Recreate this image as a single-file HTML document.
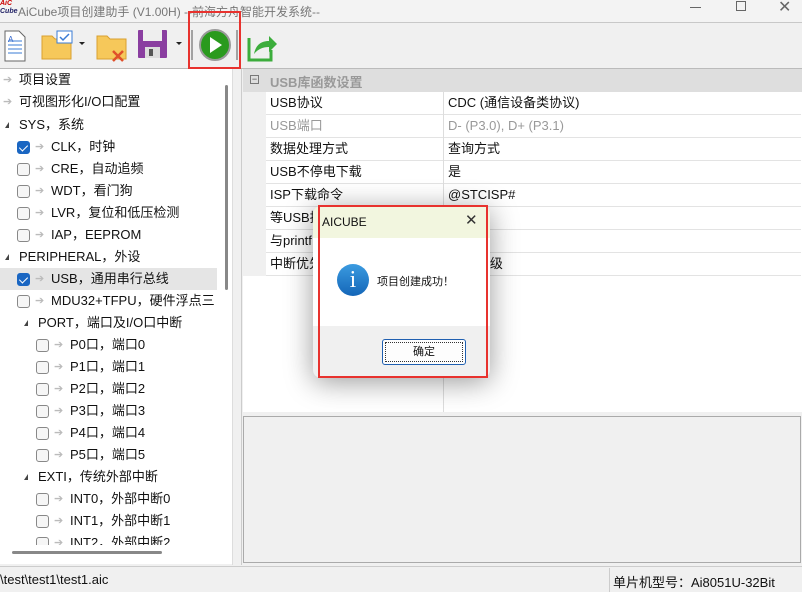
<!DOCTYPE html><html><head><meta charset="utf-8"><style>
*{margin:0;padding:0;box-sizing:border-box}
body{width:802px;height:592px;overflow:hidden;background:#f0f0f0;font-family:"Liberation Sans","Noto Sans CJK SC",sans-serif;font-size:13px;color:#111;position:relative}
.a{position:absolute}
.row{position:absolute;left:0;width:217px;height:22px;line-height:22px;white-space:nowrap}
.cb{position:absolute;top:5px;width:13px;height:13px;border:1px solid #888;border-radius:3px;background:#f6f6f6}
.cb.on{background:#1a66c2;border-color:#1a66c2}
.cb.on:after{content:"";position:absolute;left:3px;top:1px;width:4px;height:7px;border:solid #fff;border-width:0 1.5px 1.5px 0;transform:rotate(45deg)}
.ar{position:absolute;color:#bbb;font-size:11px}
.tri{position:absolute;top:8px;width:0;height:0;border-left:4px solid transparent;border-bottom:6px solid #444}
.pr{position:absolute;left:266px;width:535px;height:23px;line-height:22px;border-bottom:1px solid #e3e3e3;background:#fff}
.pr span{position:absolute;left:4px}
.pr b{font-weight:normal;position:absolute;left:182px}
</style></head><body>
<div class="a" style="left:0;top:0;width:802px;height:23px;background:#f3f3f3;border-bottom:1px solid #c8c8c8"></div>
<div class="a" style="left:0;top:0;font-size:7px;color:#c00;font-style:italic;font-weight:bold;line-height:8px">AiC<br><span style="color:#226">Cube</span></div>
<div class="a" style="left:18px;top:3px;color:#777;font-size:12px">AiCube项目创建助手 (V1.00H) --前海方舟智能开发系统--</div>
<div class="a" style="left:690px;top:7px;width:11px;border-top:1px solid #666"></div>
<div class="a" style="left:736px;top:1px;width:10px;height:10px;border:1px solid #666"></div>
<div class="a" style="left:778px;top:-3px;color:#666;font-size:16px">✕</div>
<div class="a" style="left:0;top:68px;width:802px;border-top:1px solid #bbb"></div>
<svg class="a" style="left:0;top:26px" width="290" height="40">
<path d="M5 5h14l6 6v24H5z" fill="#fff" stroke="#666"/><path d="M8 15h14M8 19h14M8 23h14M8 27h14" stroke="#3a7bd5"/><text x="8" y="16" font-size="8" fill="#36c">A</text>
<path d="M42 10h10l3 3h16v20H42z" fill="#f6c85a" stroke="#d9a030"/><rect x="57" y="5" width="15" height="12" fill="#fff" stroke="#3a7bd5"/><path d="M60 11l3 3 6-6" stroke="#3a7bd5" fill="none" stroke-width="1.5"/>
<path d="M79 16l3 3 3-3z" fill="#222"/>
<path d="M97 10h10l3 3h16v20H97z" fill="#f6c85a" stroke="#d9a030"/><path d="M113 25l10 10M123 25l-10 10" stroke="#e0502a" stroke-width="2.5"/>
<rect x="138" y="4" width="29" height="28" fill="#8a3ea0" rx="1"/><rect x="143" y="4" width="19" height="11" fill="#eee"/><rect x="145" y="21" width="15" height="11" fill="#ddd"/><rect x="149" y="23" width="4" height="7" fill="#555"/>
<path d="M176 16l3 3 3-3z" fill="#222"/>
<line x1="192" y1="4" x2="192" y2="34" stroke="#555"/><line x1="237" y1="4" x2="237" y2="34" stroke="#555"/>
<circle cx="215" cy="19" r="15" fill="#2a9a1e" stroke="#9a9a9a" stroke-width="2"/><path d="M210 11l12 8-12 8z" fill="#fff"/>
<path d="M249 12v22h22V24" stroke="#3cad3c" stroke-width="3" fill="none"/><path d="M254 28c2-10 8-13 15-13V10l8 8-8 8v-5c-6 0-11 2-15 7z" fill="#3cad3c"/>
</svg>
<div class="a" style="left:188px;top:11px;width:53px;height:58px;border:2px solid #e8322e"></div>
<div class="a" style="left:0;top:69px;width:232px;height:478px;background:#fff"></div>
<div class="a" style="left:0;top:547px;width:232px;height:17px;background:#fff"></div>
<div class="a" style="left:12px;top:551px;width:150px;height:3px;background:#888;border-radius:2px"></div>
<div class="a" style="left:225px;top:85px;width:3px;height:205px;background:#888;border-radius:2px"></div>
<div class="a" style="left:232px;top:69px;width:10px;height:496px;background:#f0f0f0;border-left:1px solid #ddd;border-right:1px solid #ccc"></div>
<div class="row" style="top:69px"><span class="ar" style="left:3px">➔</span><span class="a" style="left:19px">项目设置</span></div>
<div class="row" style="top:91px"><span class="ar" style="left:3px">➔</span><span class="a" style="left:19px">可视图形化I/O口配置</span></div>
<div class="row" style="top:114px"><span class="tri" style="left:5px"></span><span class="a" style="left:19px">SYS，系统</span></div>
<div class="row" style="top:136px"><span class="cb on" style="left:17px"></span><span class="ar" style="left:35px">➔</span><span class="a" style="left:51px">CLK，时钟</span></div>
<div class="row" style="top:158px"><span class="cb" style="left:17px"></span><span class="ar" style="left:35px">➔</span><span class="a" style="left:51px">CRE，自动追频</span></div>
<div class="row" style="top:180px"><span class="cb" style="left:17px"></span><span class="ar" style="left:35px">➔</span><span class="a" style="left:51px">WDT，看门狗</span></div>
<div class="row" style="top:202px"><span class="cb" style="left:17px"></span><span class="ar" style="left:35px">➔</span><span class="a" style="left:51px">LVR，复位和低压检测</span></div>
<div class="row" style="top:224px"><span class="cb" style="left:17px"></span><span class="ar" style="left:35px">➔</span><span class="a" style="left:51px">IAP，EEPROM</span></div>
<div class="row" style="top:246px"><span class="tri" style="left:5px"></span><span class="a" style="left:19px">PERIPHERAL，外设</span></div>
<div class="row" style="top:268px;background:#e5e5e5"><span class="cb on" style="left:17px"></span><span class="ar" style="left:35px">➔</span><span class="a" style="left:51px">USB，通用串行总线</span></div>
<div class="row" style="top:290px;overflow:hidden"><span class="cb" style="left:17px"></span><span class="ar" style="left:35px">➔</span><span class="a" style="left:51px">MDU32+TFPU，硬件浮点三</span></div>
<div class="row" style="top:312px"><span class="tri" style="left:24px"></span><span class="a" style="left:38px">PORT，端口及I/O口中断</span></div>
<div class="row" style="top:334px"><span class="cb" style="left:36px"></span><span class="ar" style="left:54px">➔</span><span class="a" style="left:70px">P0口，端口0</span></div>
<div class="row" style="top:356px"><span class="cb" style="left:36px"></span><span class="ar" style="left:54px">➔</span><span class="a" style="left:70px">P1口，端口1</span></div>
<div class="row" style="top:378px"><span class="cb" style="left:36px"></span><span class="ar" style="left:54px">➔</span><span class="a" style="left:70px">P2口，端口2</span></div>
<div class="row" style="top:400px"><span class="cb" style="left:36px"></span><span class="ar" style="left:54px">➔</span><span class="a" style="left:70px">P3口，端口3</span></div>
<div class="row" style="top:422px"><span class="cb" style="left:36px"></span><span class="ar" style="left:54px">➔</span><span class="a" style="left:70px">P4口，端口4</span></div>
<div class="row" style="top:444px"><span class="cb" style="left:36px"></span><span class="ar" style="left:54px">➔</span><span class="a" style="left:70px">P5口，端口5</span></div>
<div class="row" style="top:466px"><span class="tri" style="left:24px"></span><span class="a" style="left:38px">EXTI，传统外部中断</span></div>
<div class="row" style="top:488px"><span class="cb" style="left:36px"></span><span class="ar" style="left:54px">➔</span><span class="a" style="left:70px">INT0，外部中断0</span></div>
<div class="row" style="top:510px"><span class="cb" style="left:36px"></span><span class="ar" style="left:54px">➔</span><span class="a" style="left:70px">INT1，外部中断1</span></div>
<div class="row" style="top:532px;height:13px;overflow:hidden"><span class="cb" style="left:36px"></span><span class="ar" style="left:54px">➔</span><span class="a" style="left:70px">INT2，外部中断2</span></div>
<div class="a" style="left:243px;top:69px;width:559px;height:343px;background:#fff"></div>
<div class="a" style="left:243px;top:69px;width:559px;height:23px;background:#dedede"></div>
<div class="a" style="left:250px;top:75px;width:9px;height:9px;border:1px solid #777;font-size:9px;line-height:6px;text-align:center;color:#444">−</div>
<div class="a" style="left:270px;top:72px;color:#999;font-weight:bold">USB库函数设置</div>
<div class="a" style="left:243px;top:92px;width:23px;height:184px;background:#f0f0f0"></div>
<div class="pr" style="top:92px"><span>USB协议</span><b>CDC (通信设备类协议)</b></div>
<div class="pr" style="top:115px;color:#999"><span>USB端口</span><b>D- (P3.0), D+ (P3.1)</b></div>
<div class="pr" style="top:138px"><span>数据处理方式</span><b>查询方式</b></div>
<div class="pr" style="top:161px"><span>USB不停电下载</span><b>是</b></div>
<div class="pr" style="top:184px"><span>ISP下载命令</span><b>@STCISP#</b></div>
<div class="pr" style="top:207px"><span>等USB接</span></div>
<div class="pr" style="top:230px"><span>与printf</span></div>
<div class="pr" style="top:253px"><span>中断优先</span><b>&nbsp;&nbsp;&nbsp;&nbsp;&nbsp;&nbsp;&nbsp;&nbsp;先级</b></div>
<div class="a" style="left:443px;top:92px;height:320px;border-left:1px solid #ddd"></div>
<div class="a" style="left:243px;top:416px;width:558px;height:147px;background:#f0f0f0;border:1px solid #aaa"></div>
<div class="a" style="left:0;top:566px;width:802px;border-top:1px solid #ccc"></div>
<div class="a" style="left:0;top:572px">\test\test1\test1.aic</div>
<div class="a" style="left:609px;top:568px;height:24px;border-left:1px solid #ccc"></div>
<div class="a" style="left:613px;top:572px">单片机型号：Ai8051U-32Bit</div>
<div class="a" style="left:313px;top:206px;width:177px;height:172px;border-radius:8px;box-shadow:0 4px 28px rgba(0,0,0,.4);background:#f0f0f0;overflow:hidden">
 <div class="a" style="left:0;top:0;width:177px;height:32px;background:#f2f6df"></div>
 <div class="a" style="left:9px;top:9px;font-size:12px">AICUBE</div>
 <div class="a" style="left:152px;top:5px;font-size:15px;color:#333">✕</div>
 <div class="a" style="left:0;top:32px;width:177px;height:88px;background:#fff"></div>
 <div class="a" style="left:24px;top:58px;width:32px;height:32px;border-radius:50%;background:linear-gradient(#3b9be0,#1466b8);color:#fff;text-align:center;font-size:24px;line-height:32px;font-family:'Liberation Serif',serif">i</div>
 <div class="a" style="left:64px;top:67px;font-size:11px">项目创建成功！</div>
 <div class="a" style="left:69px;top:133px;width:84px;height:26px;border:1px solid #1f5fb0;border-radius:3px;background:#fdfdfd;font-size:11px;text-align:center;line-height:24px"><div style="position:absolute;inset:2px;border:1px dotted #333"></div>确定</div>
</div>
<div class="a" style="left:318px;top:205px;width:170px;height:173px;border:2px solid #e8322e"></div>
</body></html>
